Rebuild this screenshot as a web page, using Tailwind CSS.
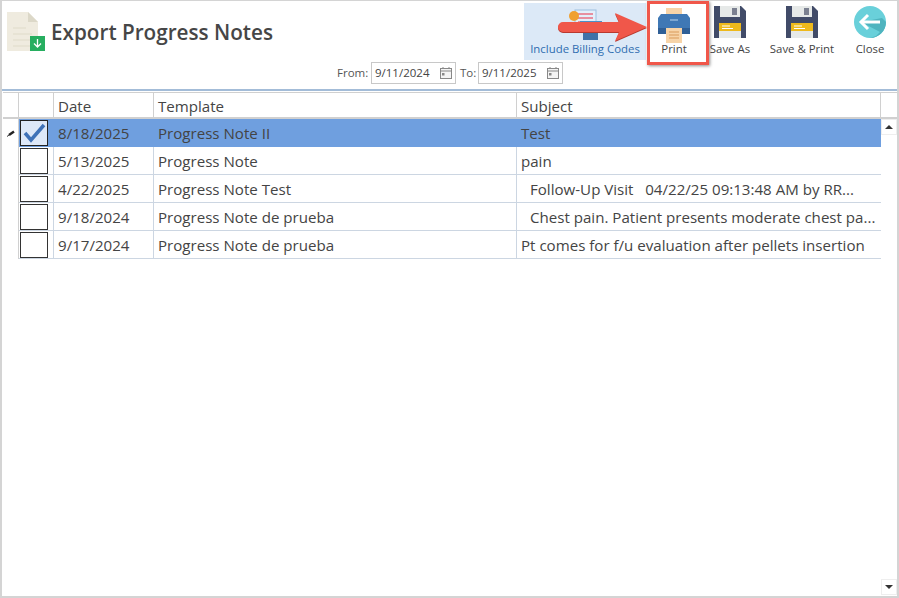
<!DOCTYPE html>
<html lang="en">
<head>
    <meta charset="UTF-8">
    <title>Export Progress Notes</title>
    <script src="https://cdn.jsdelivr.net/npm/@tailwindcss/browser@4"></script>
</head>
<body class="bg-white">
    <div class="w-[899px] h-[598px] overflow-hidden flex flex-col border-2 border-t border-[#d4d4d4] bg-white text-[#444] font-['Open_Sans','Noto_Sans',sans-serif]">

        <!-- header -->
        <div class="relative h-[88px] flex shrink-0">
            <svg class="ml-[5px] mt-[10px] w-[40px] h-[41px]" viewBox="0 0 40 41">
                <path d="M0 1h21l10 10v29H0z" fill="#efebdf"/>
                <path d="M21 1l10 10H21z" fill="#dcd8c8"/>
                <path d="M6 17h13M6 23h19M6 29h19M6 35h19" stroke="#e0dbca" stroke-width="1.2"/>
                <rect x="23" y="25" width="15" height="15" fill="#27ae60"/>
                <path d="M30.500 28v8M27 32.500l3.500 3.500 3.500-3.500" stroke="#fff" stroke-width="1.300" fill="none"/>
            </svg>
            <div class="ml-[4px] mt-[16px] text-[20.700px] leading-[30px] font-semibold text-[#464646]">Export Progress Notes</div>

            <!-- from / to -->
            <div class="absolute left-[335px] top-[61px] flex items-center text-[11.500px] text-[#555] h-[22px]">
                <span class="w-[34px]">From:</span>
                <div class="w-[85px] h-[22px] border border-[#c8c8c8] flex items-center justify-between pl-[3px] pr-[2px] text-[#444]">
                    <span>9/11/2024</span>
                    <svg class="w-[14px] h-[14px]" viewBox="0 0 14 14"><rect x="1.500" y="2.500" width="11" height="10" fill="#f4f4f4" stroke="#888"/><path d="M1.500 5h11" stroke="#888"/><path d="M4 1v2M10 1v2" stroke="#888"/><rect x="3" y="7" width="2.500" height="2.500" fill="#888"/></svg>
                </div>
                <span class="ml-[4px] w-[18px]">To:</span>
                <div class="w-[85px] h-[22px] border border-[#c8c8c8] flex items-center justify-between pl-[3px] pr-[2px] text-[#444]">
                    <span>9/11/2025</span>
                    <svg class="w-[14px] h-[14px]" viewBox="0 0 14 14"><rect x="1.500" y="2.500" width="11" height="10" fill="#f4f4f4" stroke="#888"/><path d="M1.500 5h11" stroke="#888"/><path d="M4 1v2M10 1v2" stroke="#888"/><rect x="3" y="7" width="2.500" height="2.500" fill="#888"/></svg>
                </div>
            </div>

            <!-- toolbar -->
            <div class="absolute left-[522px] top-[2px] flex text-[11.400px] leading-[14px] text-center">
                <div class="w-[122px] h-[57px] bg-[#dce9f7] text-[#2f6db0] flex flex-col items-center">
                    <svg class="mt-[4px] w-[44px] h-[34px]" viewBox="0 0 44 34">
                        <rect x="12" y="3" width="21" height="20" fill="#e3effa" stroke="#9cc0e0"/>
                        <path d="M15 7h15M15 11h15M15 15h15" stroke="#e78fa0" stroke-width="2"/>
                        <circle cx="11" cy="9" r="5" fill="#f0a030"/>
                        <rect x="17" y="14" width="22" height="9" fill="#4a90c8"/>
                        <rect x="20" y="25" width="15" height="8" fill="#3f72a8"/>
                    </svg>
                    <span class="mt-[1px]">Include Billing Codes</span>
                </div>
                <div class="relative w-[62px] h-[65px] -mt-[2px] ml-[1px] flex flex-col items-center text-[#444]">
                    <svg class="mt-[7px] -ml-[8px] w-[34px] h-[35px]" viewBox="0 0 34 35">
                        <rect x="9" y="0" width="16" height="10" fill="#f7d4a8"/>
                        <path d="M4 6h26l3 4v16H1V10z" fill="#3f78b5"/>
                        <rect x="1" y="20" width="32" height="6" fill="#2f5f96"/>
                        <path d="M13 12h8" stroke="#bcd6ee"/>
                        <rect x="9" y="20" width="16" height="15" fill="#f7d4a8"/>
                        <path d="M12 24h10M12 27h10M12 30h10" stroke="#d99a5a"/>
                    </svg>
                    <span class="-ml-[8px] -mt-[1px]">Print</span>
                </div>
                <div class="w-[44px] flex flex-col items-center -ml-[1px]">
                    <svg class="mt-[3px] w-[32px] h-[32px]" viewBox="0 0 32 32">
                        <path d="M0 0h27l5 5v27H0z" fill="#414b68"/>
                        <rect x="6" y="0" width="20" height="11" fill="#e6e9e8"/>
                        <rect x="18" y="2" width="5" height="7" fill="#7b8090"/>
                        <rect x="5" y="17" width="22" height="15" fill="#e6e9e8"/>
                        <rect x="5" y="17" width="22" height="8" fill="#eeb91c"/>
                        <path d="M8 20h8M8 22.500h11" stroke="#fff"/>
                    </svg>
                    <span class="mt-[4px] whitespace-nowrap">Save As</span>
                </div>
                <div class="ml-[14px] w-[72px] flex flex-col items-center">
                    <svg class="mt-[3px] w-[32px] h-[32px]" viewBox="0 0 32 32">
                        <path d="M0 0h27l5 5v27H0z" fill="#414b68"/>
                        <rect x="6" y="0" width="20" height="11" fill="#e6e9e8"/>
                        <rect x="18" y="2" width="5" height="7" fill="#7b8090"/>
                        <rect x="5" y="17" width="22" height="15" fill="#e6e9e8"/>
                        <rect x="5" y="17" width="22" height="8" fill="#eeb91c"/>
                        <path d="M8 20h8M8 22.500h11" stroke="#fff"/>
                    </svg>
                    <span class="mt-[4px] whitespace-nowrap">Save &amp; Print</span>
                </div>
                <div class="ml-[12px] w-[40px] flex flex-col items-center">
                    <svg class="mt-[3px] w-[32px] h-[32px]" viewBox="0 0 32 32">
                        <circle cx="16" cy="16" r="16" fill="#69d0da"/>
                        <path d="M7 16l19 10-4 4-6 2a16 16 0 0 0 16-16l-4-4z" fill="#4fb4bf"/>
                        <path d="M7 16h19" stroke="#fff" stroke-width="3"/>
                        <path d="M14 9l-7 7 7 7" stroke="#fff" stroke-width="3" fill="none"/>
                    </svg>
                    <span class="mt-[4px]">Close</span>
                </div>
            </div>

            <!-- callout box + arrow drawn over the toolbar -->
            <div class="absolute left-[645px] top-0 w-[62px] h-[64px] border-[3px] border-[#f0574a] shadow-[1px_1px_3px_rgba(0,0,0,0.45)]"></div>
            <svg class="absolute left-[555px] top-[11px] w-[92px] h-[31px]" viewBox="0 0 92 31">
                <path d="M58 1l32 14-32 14 4-9H6a5 5 0 0 1 0-10h56z" fill="#b8392f" transform="translate(0 1)"/>
                <path d="M58 1l32 14-32 14 4-9H6a5 5 0 0 1 0-10h56z" fill="#f0574a"/>
            </svg>
        </div>

        <div class="h-[2px] bg-[#a3bcd8] shrink-0"></div>

        <!-- grid -->
        <div class="flex-1 flex flex-col text-[15.100px] text-[#444] mt-px ml-px">
            <div class="flex h-[27px] border-b-2 border-t border-[#d0d0d0] shrink-0">
                <div class="w-[16px] border-r border-[#d0d0d0]"></div>
                <div class="w-[35px] border-r border-[#d0d0d0]"></div>
                <div class="w-[100px] border-r border-[#d0d0d0] pl-[4px] leading-[27px]">Date</div>
                <div class="w-[363px] border-r border-[#d0d0d0] pl-[4px] leading-[27px]">Template</div>
                <div class="w-[364px] border-r border-[#d0d0d0] pl-[4px] leading-[27px]">Subject</div>
            </div>
            <div class="flex-1 flex">
                <div class="w-[878px] flex flex-col">

                    <div class="flex h-[28px]">
                        <div class="w-[16px] flex items-center justify-center border-r border-[#d0d0d0]">
                            <svg class="w-[9px] h-[7px]" viewBox="0 0 9 7"><path d="M1 6.500l2-1.500" stroke="#333"/><path d="M3 5l5-3.500" stroke="#222" stroke-width="2.400"/></svg>
                        </div>
                        <div class="w-[35px] bg-[#6f9fdf] flex items-center pl-px">
                            <div class="w-[28px] h-[26px] border border-[#222] bg-[#dde8f8] flex items-center justify-center">
                                <svg class="w-[24px] h-[20px]" viewBox="0 0 24 20"><path d="M3 10l6 7L22 2" stroke="#3f72b8" stroke-width="3.500" fill="none"/></svg>
                            </div>
                        </div>
                        <div class="w-[100px] bg-[#6f9fdf] pl-[4px] leading-[28px]">8/18/2025</div>
                        <div class="w-[363px] bg-[#6f9fdf] pl-[4px] leading-[28px]">Progress Note II</div>
                        <div class="w-[364px] bg-[#6f9fdf] pl-[4px] leading-[28px]">Test</div>
                    </div>

                    <div class="flex h-[28px]">
                        <div class="w-[16px] border-r border-[#d0d0d0]"></div>
                        <div class="w-[35px] flex items-center pl-px border-b border-r border-[#ccd6e2]"><div class="w-[28px] h-[26px] border border-[#333]"></div></div>
                        <div class="w-[100px] border-b border-r border-[#ccd6e2] pl-[4px] leading-[29px]">5/13/2025</div>
                        <div class="w-[363px] border-b border-r border-[#ccd6e2] pl-[4px] leading-[29px]">Progress Note</div>
                        <div class="w-[364px] border-b border-[#ccd6e2] pl-[4px] leading-[29px]">pain</div>
                    </div>

                    <div class="flex h-[28px]">
                        <div class="w-[16px] border-r border-[#d0d0d0]"></div>
                        <div class="w-[35px] flex items-center pl-px border-b border-r border-[#ccd6e2]"><div class="w-[28px] h-[26px] border border-[#333]"></div></div>
                        <div class="w-[100px] border-b border-r border-[#ccd6e2] pl-[4px] leading-[29px]">4/22/2025</div>
                        <div class="w-[363px] border-b border-r border-[#ccd6e2] pl-[4px] leading-[29px]">Progress Note Test</div>
                        <div class="w-[364px] border-b border-[#ccd6e2] pl-[13px] leading-[29px] whitespace-pre">Follow-Up Visit   04/22/25 09:13:48 AM by RR...</div>
                    </div>

                    <div class="flex h-[28px]">
                        <div class="w-[16px] border-r border-[#d0d0d0]"></div>
                        <div class="w-[35px] flex items-center pl-px border-b border-r border-[#ccd6e2]"><div class="w-[28px] h-[26px] border border-[#333]"></div></div>
                        <div class="w-[100px] border-b border-r border-[#ccd6e2] pl-[4px] leading-[29px]">9/18/2024</div>
                        <div class="w-[363px] border-b border-r border-[#ccd6e2] pl-[4px] leading-[29px]">Progress Note de prueba</div>
                        <div class="w-[364px] border-b border-[#ccd6e2] pl-[13px] leading-[29px] whitespace-pre">Chest pain. Patient presents moderate chest pa...</div>
                    </div>

                    <div class="flex h-[28px]">
                        <div class="w-[16px] border-r border-[#d0d0d0]"></div>
                        <div class="w-[35px] flex items-center pl-px border-b border-r border-[#ccd6e2]"><div class="w-[28px] h-[26px] border border-[#333]"></div></div>
                        <div class="w-[100px] border-b border-r border-[#ccd6e2] pl-[4px] leading-[29px]">9/17/2024</div>
                        <div class="w-[363px] border-b border-r border-[#ccd6e2] pl-[4px] leading-[29px]">Progress Note de prueba</div>
                        <div class="w-[364px] border-b border-[#ccd6e2] pl-[4px] leading-[29px] whitespace-pre">Pt comes for f/u evaluation after pellets insertion</div>
                    </div>
                </div>

                <!-- scrollbar -->
                <div class="w-[16px] flex flex-col justify-between">
                    <div class="h-[16px] flex items-center justify-center border border-[#eee]"><div class="border-x-[4px] border-x-transparent border-b-[4px] border-b-[#333]"></div></div>
                    <div class="h-[16px] mb-[1px] flex items-center justify-center border border-[#eee]"><div class="border-x-[4px] border-x-transparent border-t-[4px] border-t-[#333]"></div></div>
                </div>
            </div>
        </div>
    </div>
</body>
</html>
